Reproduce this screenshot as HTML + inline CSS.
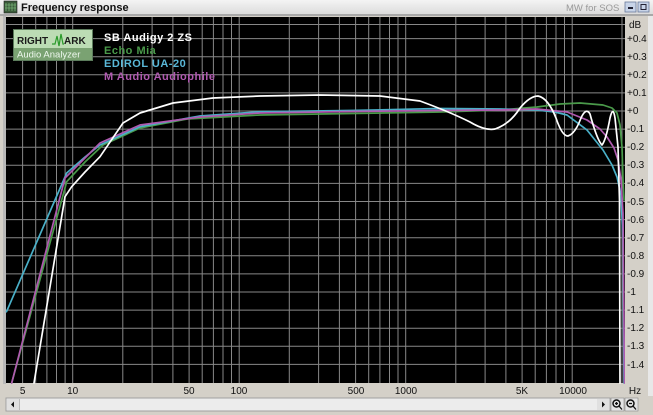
<!DOCTYPE html>
<html><head><meta charset="utf-8"><style>
html,body{margin:0;padding:0;width:653px;height:415px;overflow:hidden;background:#d4d0c8}
svg{display:block}
text{font-family:"Liberation Sans",sans-serif}
</style></head><body>
<svg width="653" height="415" viewBox="0 0 653 415" xmlns="http://www.w3.org/2000/svg">
<defs><linearGradient id="tb" x1="0" y1="0" x2="0" y2="1"><stop offset="0" stop-color="#f4f4f4"/><stop offset="1" stop-color="#dcdcdc"/></linearGradient></defs>
<rect x="0" y="0" width="653" height="415" fill="#d4d0c8"/>
<rect x="0" y="0" width="653" height="14" fill="url(#tb)"/>
<rect x="0" y="14" width="653" height="2" fill="#a8a8a8"/>
<rect x="4" y="1" width="13" height="12" fill="#3a5a3a" stroke="#222" stroke-width="0.6"/>
<path d="M6 3v8M9 3v8M12 3v8M15 3v8M5 5h11M5 8h11" stroke="#8c8" stroke-width="0.6"/>
<text x="21" y="11" font-size="11" font-weight="bold" fill="#111">Frequency response</text>
<text x="566" y="11" font-size="9.5" fill="#999">MW for SOS</text>
<rect x="625" y="2" width="11" height="10" fill="#c8d4e8" stroke="#6a7a9a" stroke-width="0.8"/>
<rect x="628" y="7" width="5" height="2" fill="#223"/>
<rect x="638" y="2" width="11" height="10" fill="#c8d4e8" stroke="#6a7a9a" stroke-width="0.8"/>
<rect x="641" y="4.5" width="5" height="5" fill="none" stroke="#223" stroke-width="1"/>
<rect x="3" y="16" width="3" height="368" fill="#b8b8b8"/>
<rect x="6" y="17" width="619" height="366" fill="#000"/>
<g stroke="#888" stroke-width="1">
<path d="M6 24.5H625M6 38.6H625M6 56.7H625M6 74.8H625M6 92.9H625M6 111H625M6 129.1H625M6 147.2H625M6 165.3H625M6 183.4H625M6 201.5H625M6 219.6H625M6 237.7H625M6 255.8H625M6 273.9H625M6 292H625M6 310.1H625M6 328.2H625M6 346.3H625M6 364.4H625"/>
<path d="M22.6 17V383M35.7 17V383M46.9 17V383M56.5 17V383M65.1 17V383M72.7 17V383M122.8 17V383M152.1 17V383M172.9 17V383M189.1 17V383M202.2 17V383M213.4 17V383M223 17V383M231.5 17V383M239.2 17V383M289.3 17V383M318.6 17V383M339.4 17V383M355.6 17V383M368.7 17V383M379.9 17V383M389.5 17V383M398 17V383M405.7 17V383M455.8 17V383M485.1 17V383M505.9 17V383M522.1 17V383M535.2 17V383M546.4 17V383M556 17V383M564.5 17V383M572.2 17V383M622 17V383"/>
</g>
<g fill="none" stroke-width="1.7" stroke-linejoin="round" stroke-linecap="round">
<path stroke="#4a9a4a" d="M11.7 383L66.7 181.7L85 162L103 145L140 128L187 119L260 115L350 113.5L440 112L500 110L537 107L560 104L580 103L603 105L612 108L617 113L620 125L622 147L623 180L624 200"/>
<path stroke="#4ab0c8" d="M6.5 311.7L66.7 173L85 157L100 145L140 126.7L200 116L260 111.7L350 110.5L440 108.5L500 109L537 110L555 112L567 115L587 130L603 150L612 165L617 177L621 195L623 240L624 383"/>
<path stroke="#b05ab0" d="M11.7 383L65 178L85 158L100 143L140 125L200 117L260 113L350 111.5L440 110.5L500 110L537 109L567 112L587 120L600 129L607 137L614 148L618 160L621 180L623 213L624.5 383"/>
<path stroke="#ffffff" d="M34 383L65 196.7L71.7 186.7L85 172L100 156.7L123 123L140 113L173 103L213 98L260 96L320 95L380 96L420 101Q450 112 470 122Q485 131 495 129Q510 124 520 108Q530 96 538 96Q548 98 556 118Q562 136 568 136Q575 134 581 118Q586 107 590 114Q597 140 602 145Q606 140 610 118Q613 105 615 118L618 147L619.5 200L620 383"/>
</g>
<rect x="13" y="29" width="80" height="32" fill="#5c7c5c"/>
<rect x="14" y="30" width="78" height="18" fill="#bcdcb4"/>
<rect x="14" y="48" width="78" height="12" fill="#7aa272"/>
<text x="17" y="44" font-size="10" font-weight="bold" fill="#1a1a1a">RIGHT</text>
<path d="M52 44L55 44L57 36L59 46L61 34L63 44L64 44" fill="none" stroke="#2a9a2a" stroke-width="1.2"/>
<text x="64" y="44" font-size="10" font-weight="bold" fill="#1a1a1a">ARK</text>
<text x="17" y="57.5" font-size="9.5" fill="#eef8ee">Audio Analyzer</text>
<g font-size="11" font-weight="bold" letter-spacing="0.5">
<text x="104" y="41" fill="#ffffff">SB Audigy 2 ZS</text>
<text x="104" y="54" fill="#4a9a4a">Echo Mia</text>
<text x="104" y="67" fill="#5ab8d8">EDIROL UA-20</text>
<text x="104" y="80" fill="#b05ab0">M Audio Audiophile</text>
</g>
<rect x="625" y="16" width="22" height="368" fill="#d4d0c8"/>
<rect x="648" y="16" width="5" height="380" fill="#e8e8e8"/>
<g font-size="10" fill="#111">
<text x="629" y="28">dB</text>
<text x="627" y="42">+0.4</text><text x="627" y="60">+0.3</text><text x="627" y="78">+0.2</text><text x="627" y="96">+0.1</text><text x="627" y="114">+0</text>
<text x="627" y="132">-0.1</text><text x="627" y="150">-0.2</text><text x="627" y="168">-0.3</text><text x="627" y="186">-0.4</text><text x="627" y="205">-0.5</text>
<text x="627" y="223">-0.6</text><text x="627" y="241">-0.7</text><text x="627" y="259">-0.8</text><text x="627" y="277">-0.9</text><text x="627" y="295">-1</text>
<text x="627" y="313">-1.1</text><text x="627" y="331">-1.2</text><text x="627" y="349">-1.3</text><text x="627" y="368">-1.4</text>
</g>
<g font-size="10" fill="#111" text-anchor="middle">
<text x="22.6" y="394">5</text><text x="72.7" y="394">10</text><text x="189" y="394">50</text><text x="239" y="394">100</text>
<text x="356" y="394">500</text><text x="406" y="394">1000</text><text x="522" y="394">5K</text><text x="573" y="394">10000</text><text x="635" y="394">Hz</text>
</g>
<rect x="6" y="398" width="604" height="13" fill="#ececec" stroke="#a0a0a0" stroke-width="1"/>
<rect x="7" y="399" width="12" height="11" fill="#e0e0e0"/>
<path d="M11 404.5L14 401.5V407.5Z" fill="#111"/>
<rect x="19" y="399" width="1" height="11" fill="#bbb"/>
<rect x="597" y="399" width="12" height="11" fill="#e0e0e0"/>
<path d="M605 404.5L602 401.5V407.5Z" fill="#111"/>
<rect x="611" y="398" width="13" height="13" fill="#e4e4e4" stroke="#888" stroke-width="0.6"/>
<circle cx="616.5" cy="403.5" r="3.5" fill="none" stroke="#111" stroke-width="1.5"/>
<path d="M619 406L622 409.5M615 403.5h3M616.5 402v3" stroke="#111" stroke-width="1.3"/>
<rect x="625" y="398" width="13" height="13" fill="#e4e4e4" stroke="#888" stroke-width="0.6"/>
<circle cx="630.5" cy="403.5" r="3.5" fill="none" stroke="#111" stroke-width="1.5"/>
<path d="M633 406L636 409.5M629 403.5h3" stroke="#111" stroke-width="1.3"/>
</svg>
</body></html>
